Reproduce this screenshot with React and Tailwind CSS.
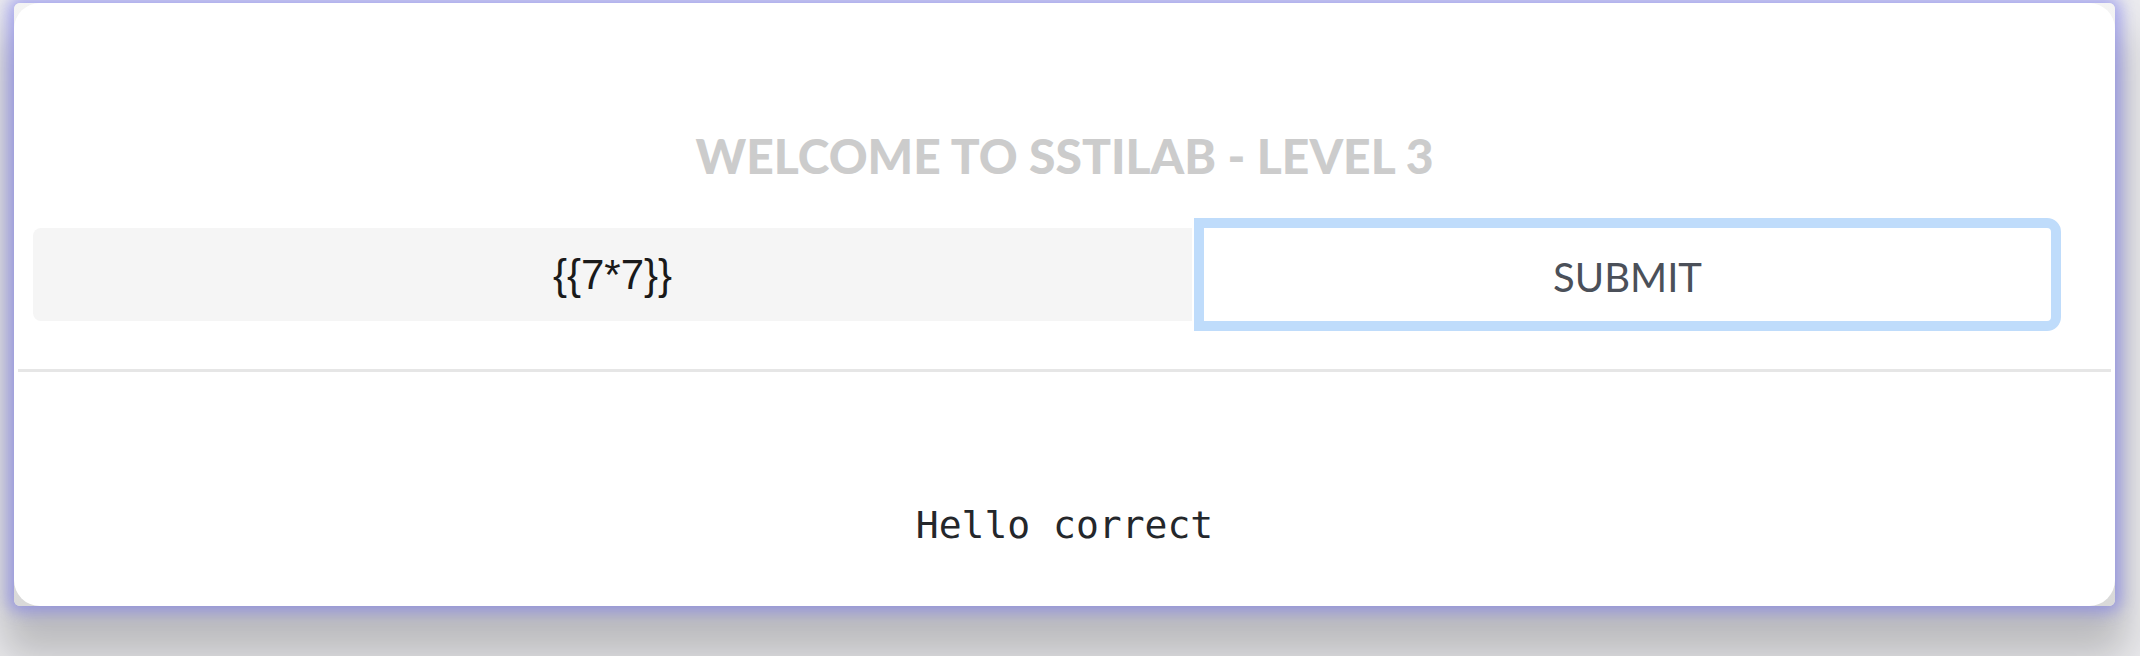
export default function App() {
  return (
    <div className="h-[656px] w-[2140px] overflow-hidden bg-[#ebebee] pl-[14px] pt-[3px]">
      <div className="w-[2101px] rounded-[6px] bg-gradient-to-b from-[#f4f4f4] to-[#d9d9d9] shadow-[0_0_16px_6px_rgba(120,120,240,0.6),0_40px_40px_12px_rgba(0,0,0,0.2)]">
        <div className="flex flex-col rounded-[26px] bg-white pb-[62px] pt-[129px]">
          <h1 className="text-center font-['Lato',sans-serif] text-[48px] font-black leading-[48px] text-[#cccccc]">
            WELCOME TO SSTILAB - LEVEL 3
          </h1>

          <form className="ml-[19px] mt-[38px] flex items-center gap-[2px]">
            <input
              readOnly
              value="{{7*7}}"
              className="h-[93px] w-[1159px] rounded-l-[8px] bg-[#f5f5f5] text-center font-['Liberation_Sans',sans-serif] text-[42px] text-[#1a1a1a] outline-none"
            />
            <button
              type="button"
              className="h-[113px] w-[867px] rounded-r-[14px] border-[10px] border-[#bfdcfb] bg-white pt-[4px] font-['Lato',sans-serif] text-[40px] font-normal text-[#4b5059]"
            >
              SUBMIT
            </button>
          </form>

          <div className="mx-[4px] mt-[38px] h-[3px] bg-[#e6e6e6]" />

          <p className="mt-[134px] text-center font-['DejaVu_Sans_Mono',monospace] text-[38px] leading-[38px] text-[#24272b]">
            Hello correct
          </p>
        </div>
      </div>
    </div>
  );
}
